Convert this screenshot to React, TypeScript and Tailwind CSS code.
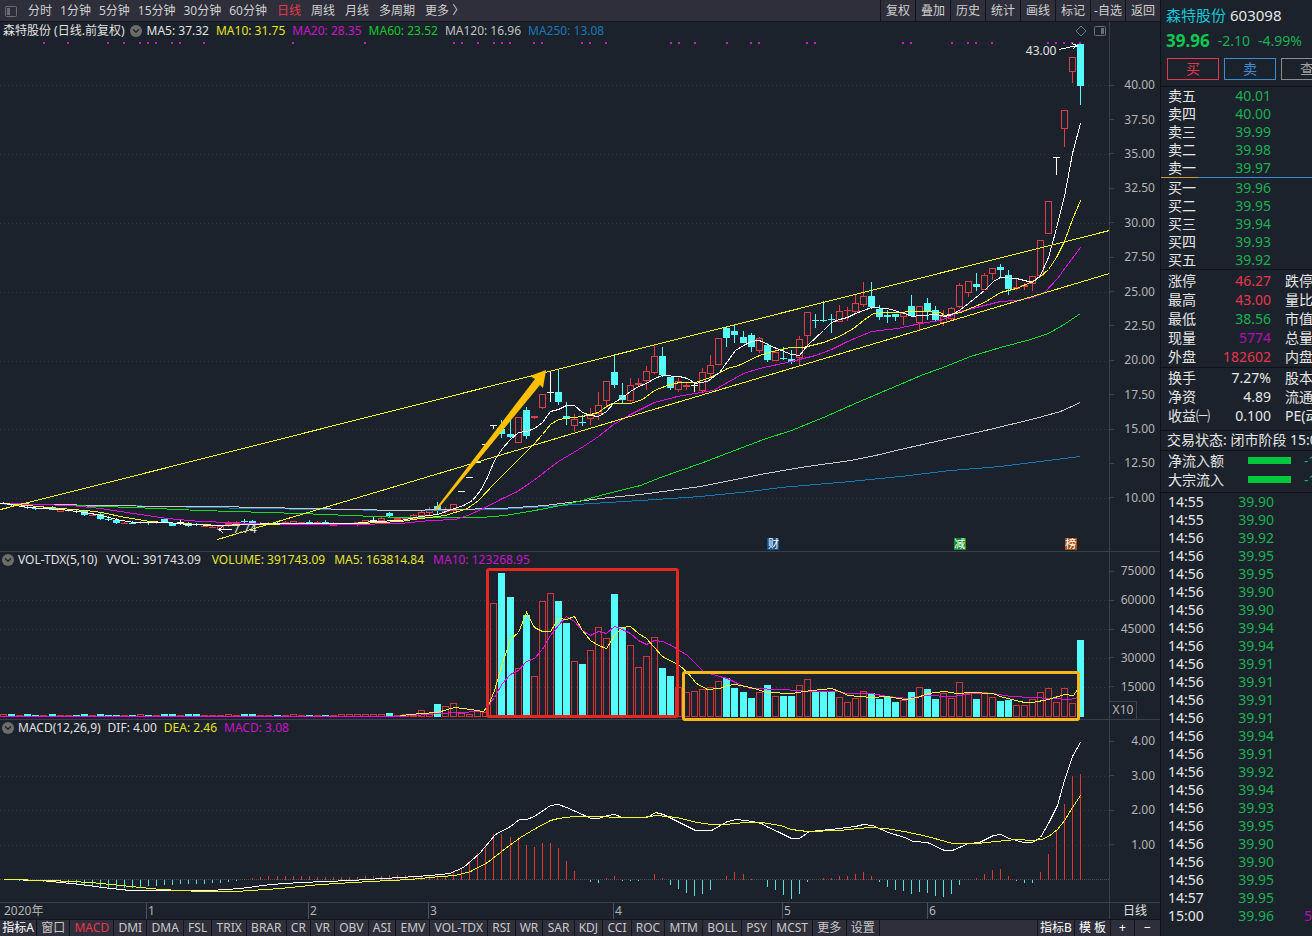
import { ChevronDown } from 'lucide-react';

type Candle = [string, number, number, number, number];

const STEP = 8.035;
const WIDTH = 1109;

// colour, high, body top, body bottom, low
const candles: Candle[] = [
  ['w', 502, 503, 503, 504], ['c', 503, 504, 505, 506], ['r', 504, 505, 506, 507], ['c', 506, 507, 508, 509], ['c', 506, 508, 509, 510], ['w', 506, 508, 508, 509],
  ['c', 506, 507, 510, 510], ['r', 508, 509, 512, 512], ['r', 509, 510, 511, 512], ['c', 510, 511, 512, 513], ['c', 510, 511, 515, 516], ['r', 514, 515, 516, 516],
  ['c', 512, 514, 519, 520], ['c', 516, 519, 520, 521], ['c', 518, 520, 523, 524], ['r', 522, 523, 524, 524], ['c', 521, 523, 524, 524], ['r', 521, 522, 523, 524],
  ['c', 521, 522, 523, 525], ['r', 521, 522, 523, 524], ['c', 518, 519, 522, 523], ['c', 522, 523, 526, 526], ['w', 520, 522, 522, 525], ['c', 522, 523, 526, 527],
  ['c', 523, 524, 525, 526], ['r', 525, 526, 527, 527], ['r', 525, 527, 528, 528], ['r', 525, 526, 530, 530], ['r', 521, 523, 525, 527], ['r', 521, 522, 524, 525],
  ['c', 519, 521, 522, 524], ['c', 520, 521, 523, 524], ['r', 522, 523, 524, 525], ['r', 522, 523, 524, 524], ['c', 522, 523, 524, 525], ['r', 521, 522, 523, 524],
  ['r', 521, 521, 524, 524], ['r', 522, 522, 523, 524], ['c', 520, 522, 523, 524], ['r', 521, 522, 523, 524], ['c', 520, 522, 523, 524], ['r', 522, 523, 526, 526],
  ['r', 523, 524, 525, 525], ['r', 523, 523, 524, 525], ['r', 522, 522, 525, 526], ['r', 520, 520, 523, 524], ['w', 517, 520, 520, 523], ['r', 517, 518, 521, 521],
  ['c', 512, 513, 516, 517], ['r', 517, 518, 520, 521], ['r', 517, 518, 519, 521], ['r', 514, 515, 519, 520], ['r', 510, 512, 516, 517], ['r', 507, 509, 513, 515],
  ['c', 502, 506, 511, 515], ['r', 507, 509, 512, 514], ['r', 504, 504, 511, 512], ['w', 491, 491, 491, 491], ['w', 477, 477, 477, 477], ['w', 462, 462, 462, 462],
  ['w', 444, 444, 444, 444], ['w', 425, 425, 425, 429], ['c', 420, 429, 434, 438], ['c', 420, 434, 437, 438], ['r', 417, 417, 443, 443], ['c', 407, 410, 436, 439],
  ['r', 416, 416, 418, 419], ['r', 394, 394, 408, 409], ['w', 372, 392, 392, 402], ['c', 369, 392, 402, 405], ['c', 402, 416, 419, 425], ['r', 414, 419, 426, 432],
  ['c', 415, 422, 423, 426], ['r', 408, 414, 419, 425], ['r', 392, 405, 414, 420], ['r', 381, 381, 401, 408], ['c', 355, 372, 385, 388], ['c', 383, 395, 400, 404],
  ['r', 378, 385, 401, 402], ['r', 378, 383, 385, 387], ['r', 366, 371, 381, 390], ['r', 345, 356, 373, 374], ['c', 347, 356, 375, 377], ['c', 377, 377, 388, 390],
  ['r', 378, 381, 390, 392], ['r', 382, 385, 387, 390], ['w', 382, 385, 385, 392], ['r', 368, 372, 391, 392], ['r', 355, 365, 374, 377], ['r', 338, 338, 365, 365],
  ['c', 326, 328, 338, 347], ['c', 325, 331, 335, 343], ['c', 331, 337, 343, 343], ['c', 333, 335, 347, 352], ['r', 337, 338, 351, 353], ['c', 343, 345, 360, 362],
  ['r', 350, 352, 361, 361], ['c', 347, 358, 359, 360], ['c', 350, 359, 362, 364], ['r', 336, 339, 358, 365], ['r', 312, 312, 336, 345], ['c', 314, 320, 321, 328],
  ['c', 301, 320, 321, 322], ['c', 314, 319, 320, 333], ['r', 305, 311, 322, 322], ['r', 307, 310, 311, 321], ['r', 295, 303, 312, 313], ['r', 282, 296, 305, 307],
  ['c', 282, 296, 307, 309], ['c', 305, 309, 317, 320], ['c', 310, 315, 317, 323], ['c', 314, 314, 317, 321], ['r', 313, 313, 317, 325], ['c', 295, 306, 316, 317],
  ['r', 306, 306, 323, 330], ['c', 298, 303, 311, 320], ['c', 306, 310, 320, 321], ['r', 310, 316, 323, 326], ['r', 307, 308, 319, 320], ['r', 283, 285, 307, 308],
  ['r', 281, 281, 293, 297], ['c', 273, 284, 287, 291], ['r', 273, 275, 290, 290], ['r', 268, 268, 274, 280], ['c', 264, 267, 270, 278], ['c', 270, 275, 289, 295],
  ['r', 278, 287, 289, 290], ['r', 283, 285, 287, 290], ['r', 276, 276, 284, 291], ['r', 240, 240, 276, 276], ['r', 201, 201, 234, 234], ['w', 157, 157, 157, 175],
  ['r', 110, 110, 129, 147], ['r', 57, 57, 72, 83], ['c', 44, 44, 86, 105],
];

// bar tops, oldest first
const volumeTops = [
  714, 714, 715, 714, 715, 715, 714, 715, 715, 715, 714, 715, 714, 715, 715, 715, 715, 714, 715, 715, 714, 714, 715, 714, 714, 715, 715,
  715, 714, 715, 714, 714, 715, 715, 715, 715, 714, 715, 715, 715, 715, 715, 714, 714, 714, 714, 714, 714, 713, 715, 714, 714,
  710, 713, 704, 706, 703, 713, 714, 711, 712, 603, 573, 597, 668, 615, 676, 601, 593, 601, 623, 661, 664, 650, 627, 638, 594, 627,
  645, 667, 656, 637, 668, 676, 687, 692, 691, 689, 687, 681, 678, 688, 692, 698, 692, 685, 696, 696, 696, 685, 679, 691, 691, 691,
  697, 702, 698, 691, 693, 699, 697, 702, 700, 692, 687, 689, 699, 693, 698, 682, 693, 699, 692, 697, 701, 700, 705, 705, 699, 692,
  688, 702, 688, 703, 640,
];

// ends of the MACD sticks, measured from the zero line at 880
const macdEnds = [
  880, 880, 881, 881, 881, 882, 882, 883, 884, 884, 885, 886, 887, 888, 889, 888, 888, 887, 886, 886, 885, 885, 884, 884, 884, 884, 883,
  883, 882, 881, 879, 878, 877, 876, 876, 876, 876, 876, 876, 877, 877, 877, 877, 877, 877, 876, 876, 876, 875, 875, 875, 876, 875, 875,
  875, 877, 872, 868, 861, 853, 845, 834, 834, 837, 837, 845, 847, 843, 843, 848, 861, 871, 880, 882, 883, 878, 876, 881, 881, 881,
  880, 874, 878, 885, 889, 893, 896, 894, 890, 880, 876, 872, 874, 879, 880, 887, 890, 895, 899, 894, 882, 880, 878, 878, 876, 876,
  874, 872, 876, 882, 887, 890, 891, 894, 892, 893, 896, 897, 894, 885, 879, 878, 874, 870, 869, 876, 881, 883, 883, 872, 854,
  830, 804, 776, 774,
];

const priceLines = [
  { color: '#1478b4', points: '4,504 120,505 250,508 400,510 500,509 560,505 640,500 700,496 750,491 780,487 850,481 900,476 950,470 1000,466 1040,461 1080,456' },
  { color: '#c8c8c8', points: '4,503 100,505 170,506 215,506 400,510 500,508 545,505 600,498 640,494 700,486 760,474 800,467 850,460 875,455 900,449 940,440 985,430 1035,418 1060,411 1080,402' },
  { color: '#14dc28', points: '4,503 70,505 133,507 200,510 300,513 350,515 400,517 480,517 505,515 540,509 570,503 600,495 640,485 660,477 700,463 763,439 791,430 823,417 857,402 890,388 923,374 940,368 970,356 1000,347 1030,339 1048,333 1062,325 1080,313' },
  { color: '#e010e0', points: '4,503 70,505 100,508 133,513 167,518 200,521 230,522 270,524 350,524 400,523 430,520 455,519 467,515 483,508 502,498 517,491 533,480 558,461 583,446 598,436 613,424 630,414 654,402 677,396 700,392 713,390 727,382 743,373 759,368 791,361 815,355 831,349 847,341 871,331 897,328 920,323 940,320 960,311 1000,301 1016,300 1032,297 1044,292 1057,278 1068,263 1080,247' },
  { color: '#f4f428', points: '4,503 60,508 85,510 101,512 125,517 150,521 180,523 220,525 300,523 360,523 400,521 420,518 445,515 467,508 478,500 494,483 510,467 526,451 534,443 542,434 550,424 558,419 582,416 598,412 606,406 612,403 630,403 642,399 654,390 667,385 679,382 695,382 710,377 727,368 738,365 759,355 776,350 790,347 803,347 823,342 839,336 853,328 863,320 873,313 887,312 923,311 940,312 944,315 960,312 984,302 1000,292 1016,288 1032,281 1040,276 1048,269 1056,257 1064,241 1072,219 1080,200' },
  { color: '#ffffff', points: '4,503 27,507 60,509 85,512 101,515 116,519 133,522 167,522 187,524 217,525 247,524 273,523 310,523 353,523 373,521 400,520 420,516 437,514 454,508 463,505 472,500 480,490 487,477 494,460 502,448 510,439 518,432 526,431 534,428 542,422 550,411 558,409 566,405 574,405 582,412 590,415 598,416 606,411 614,402 622,397 630,391 638,386 646,383 654,378 662,375 679,376 687,378 695,383 707,381 719,372 735,350 743,345 751,341 759,340 776,348 791,354 799,355 807,345 823,330 831,322 839,319 847,317 855,313 871,307 887,308 904,313 912,316 920,315 937,314 944,316 952,314 960,309 968,303 984,290 993,281 1000,277 1016,278 1032,282 1040,275 1048,257 1056,228 1064,196 1072,153 1080,123' },
  { color: '#f4f428', points: '0,509 1109,230' },
  { color: '#f4f428', points: '217,539 1109,273' },
];

const volumeLines = [
  { color: '#e010e0', points: '0,716 400,716 454,712 483,711 494,697 502,683 510,674 518,670 526,661 534,658 542,649 550,635 558,625 566,616 574,621 582,630 590,635 598,631 606,633 614,626 622,629 630,633 638,640 646,644 654,640 662,641 671,645 687,655 700,668 703,671 719,676 727,678 737,683 750,688 783,689 807,691 837,691 847,693 871,693 887,696 908,698 923,695 953,696 973,693 992,693 1010,696 1032,697 1070,699 1077,697' },
  { color: '#f4f428', points: '400,715 421,713 437,712 454,707 470,709 483,711 488,705 494,690 502,663 510,639 518,632 526,612 534,627 542,631 550,631 558,618 566,619 574,616 582,630 590,640 598,645 606,648 614,635 622,627 630,626 638,633 646,638 654,647 662,656 679,665 687,672 696,683 707,689 719,688 727,685 735,684 750,687 767,692 792,693 803,691 831,688 839,691 848,695 871,697 887,696 904,699 917,697 928,693 944,691 957,693 970,692 992,693 1003,697 1024,702 1032,702 1048,699 1064,694 1073,695 1077,689' },
];

const macdLines = [
  { color: '#ffffff', points: '4,879 40,880 80,884 110,888 130,890 170,890 210,890 240,888 270,884 300,882 350,880 400,877 430,875 449,873 463,867 479,853 495,834 510,826 519,819 526,819 534,816 550,805 558,804 566,807 591,818 598,818 607,815 614,814 622,817 647,817 655,812 663,814 679,822 695,830 711,830 727,821 736,819 752,821 761,823 768,827 777,831 791,838 799,838 809,831 830,829 855,826 863,824 872,825 888,832 904,837 913,841 927,842 944,850 952,850 968,843 979,842 993,835 1000,834 1009,838 1023,842 1032,842 1040,837 1048,823 1057,805 1064,780 1072,756 1080,742' },
  { color: '#f4f428', points: '4,879 50,880 90,882 130,886 160,889 200,891 235,891 280,888 320,884 370,881 410,879 440,876 455,875 470,871 487,862 505,848 520,837 535,828 550,820 558,818 573,816 642,817 656,815 676,817 697,822 711,824 725,824 745,822 761,822 780,825 791,829 807,831 839,830 869,827 885,828 904,831 927,836 952,843 977,843 1005,840 1016,839 1032,840 1041,839 1048,836 1057,829 1064,820 1072,807 1080,795' },
];

const eventDots = [
  44, 68, 108, 124, 140, 148, 156, 172, 180, 204, 293, 365, 454, 462, 478, 494, 502, 510, 534, 542, 582, 590, 606, 671, 679,
  695, 727, 751, 759, 807, 815, 903, 911, 952, 968, 976, 992, 1048, 1056, 1064, 1072, 1080,
];

const minutePeriods = ['分时', '1分钟', '5分钟', '15分钟', '30分钟', '60分钟'];
const longPeriods = ['日线', '周线', '月线', '多周期', '更多 〉'];
const tools = ['复权', '叠加', '历史', '统计', '画线', '标记', '-自选', '返回'];
const indicators = [
  '窗口', 'MACD', 'DMI', 'DMA', 'FSL', 'TRIX', 'BRAR', 'CR', 'VR', 'OBV', 'ASI', 'EMV', 'VOL-TDX', 'RSI', 'WR', 'SAR', 'KDJ',
  'CCI', 'ROC', 'MTM', 'BOLL', 'PSY', 'MCST', '更多', '设置',
];
const months = [
  { label: '2020年', width: 146 },
  { label: '1', width: 162 },
  { label: '2', width: 120 },
  { label: '3', width: 185 },
  { label: '4', width: 169 },
  { label: '5', width: 145 },
  { label: '6', width: 182 },
];

const priceAxis = ['40.00', '37.50', '35.00', '32.50', '30.00', '27.50', '25.00', '22.50', '20.00', '17.50', '15.00', '12.50', '10.00'];
const volumeAxis = ['75000', '60000', '45000', '30000', '15000'];
const macdAxis = ['4.00', '3.00', '2.00', '1.00'];

const asks = [['卖五', '40.01'], ['卖四', '40.00'], ['卖三', '39.99'], ['卖二', '39.98'], ['卖一', '39.97']];
const bids = [['买一', '39.96'], ['买二', '39.95'], ['买三', '39.94'], ['买四', '39.93'], ['买五', '39.92']];
const stats = [
  ['涨停', '46.27', 'text-[#e8364a]', '跌停'],
  ['最高', '43.00', 'text-[#e8364a]', '量比'],
  ['最低', '38.56', 'text-[#18b050]', '市值'],
  ['现量', '5774', 'text-[#b010b4]', '总量'],
  ['外盘', '182602', 'text-[#e8364a]', '内盘'],
];
const ratios = [
  ['换手', '7.27%', 'text-[#e6e6e6]', '股本'],
  ['净资', '4.89', 'text-[#e6e6e6]', '流通'],
  ['收益㈠', '0.100', 'text-[#e6e6e6]', 'PE(动)'],
];
const tape = [
  ['14:55', '39.90'], ['14:55', '39.90'], ['14:56', '39.92'], ['14:56', '39.95'], ['14:56', '39.95'], ['14:56', '39.90'],
  ['14:56', '39.90'], ['14:56', '39.94'], ['14:56', '39.94'], ['14:56', '39.91'], ['14:56', '39.91'], ['14:56', '39.91'],
  ['14:56', '39.91'], ['14:56', '39.94'], ['14:56', '39.91'], ['14:56', '39.92'], ['14:56', '39.94'], ['14:56', '39.93'],
  ['14:56', '39.95'], ['14:56', '39.90'], ['14:56', '39.90'], ['14:56', '39.95'], ['14:57', '39.95'], ['15:00', '39.96'],
];

const colors: Record<string, string> = { r: '#e63c46', c: '#54fcfc', w: '#ffffff' };

const barX = (index: number) => Math.round(1080 - (candles.length - 1 - index) * STEP);

const Lines = ({ lines }: { lines: { color: string; points: string }[] }) => (
  <>
    {lines.map((line, index) => (
      <polyline key={index} points={line.points} fill="none" stroke={line.color} transform="translate(0.5 0.5)" />
    ))}
  </>
);

const GridLines = ({ rows }: { rows: number[] }) => (
  <>
    {rows.map((y) => (
      <line key={y} x1="0" x2={WIDTH} y1={y + 0.5} y2={y + 0.5} stroke="#343a45" strokeDasharray="1 3" />
    ))}
  </>
);

const PriceChart = () => (
  <svg viewBox="0 40 1109 511" preserveAspectRatio="none" shapeRendering="crispEdges" className="block w-full h-full">
    <GridLines rows={[85, 154, 223, 292, 361, 429, 498]} />
    {eventDots.map((x) => (
      <rect key={x} x={x - 1} y="42" width="2" height="2" fill="#c41ec4" />
    ))}
    {candles.map(([kind, high, top, bottom, low], index) => {
      const x = barX(index);
      const color = colors[kind];
      return (
        <g key={index} stroke={color}>
          {high < top && <line x1={x + 0.5} x2={x + 0.5} y1={high} y2={top} />}
          {low > bottom && <line x1={x + 0.5} x2={x + 0.5} y1={bottom} y2={low} />}
          {kind === 'w' || bottom - top < 2 ? (
            <line x1={x - 3} x2={x + 4} y1={top + 0.5} y2={top + 0.5} />
          ) : (
            <rect x={x - 2.5} y={top + 0.5} width="6" height={bottom - top - 1} fill={kind === 'c' ? color : 'none'} />
          )}
        </g>
      );
    })}
    <Lines lines={priceLines} />
    <path d="M1059 49.5 1077 45.5M1072 43.5l5 2-4 3.500M219 529.500h13M223 526l-4 3.500 4 3.500" fill="none" stroke="#fff" />
    <path d="M434 511 535 379 530 376 546 370 543 388 540 385 437 510Z" fill="#ffc000" shapeRendering="auto" />
  </svg>
);

const VolumeChart = () => (
  <svg viewBox="0 568 1109 151" preserveAspectRatio="none" shapeRendering="crispEdges" className="block w-full h-full overflow-visible">
    <GridLines rows={[600, 629, 658, 687]} />
    {volumeTops.map((top, index) => {
      const x = barX(index);
      const down = candles[index][0] === 'c';
      return (
        <rect
          key={index}
          x={x - 2.5}
          y={top + 0.5}
          width="6"
          height={716 - top}
          stroke={down ? '#54fcfc' : '#d2343e'}
          fill={down ? '#54fcfc' : 'none'}
        />
      );
    })}
    <Lines lines={volumeLines} />
    <g fill="none" strokeWidth="3" shapeRendering="auto">
      <rect x="487.500" y="569.500" width="190" height="147" rx="1.500" stroke="#e8281e" />
      <rect x="683.500" y="672.500" width="395" height="47" rx="1.500" stroke="#f8b81c" />
    </g>
  </svg>
);

const MacdChart = () => (
  <svg viewBox="0 736 1109 166" preserveAspectRatio="none" shapeRendering="crispEdges" className="block w-full h-full">
    <GridLines rows={[776, 810, 845]} />
    <line x1="0" x2={WIDTH} y1="879.500" y2="879.500" stroke="#4c525c" strokeDasharray="1 1" />
    {macdEnds.map((end, index) => {
      const x = barX(index) + 0.5;
      return <line key={index} x1={x} x2={x} y1="880" y2={end} stroke={end > 880 ? '#54e0e0' : '#e0342e'} />;
    })}
    <Lines lines={macdLines} />
  </svg>
);

const AxisLabels = ({ labels }: { labels: string[] }) => (
  <>
    {labels.map((label) => (
      <div key={label} className="flex-1 flex items-center justify-between pr-[5px] leading-none">
        <span className="w-1 h-px bg-[#3a414c]"></span>
        {label}
      </div>
    ))}
  </>
);

const Toggle = ({ label }: { label: string }) => (
  <button aria-label={label} className="w-3 h-3 shrink-0 rounded-full bg-[#6c6c6c] text-[#1c222c] flex items-center justify-center">
    <ChevronDown size={10} strokeWidth={3} />
  </button>
);

const OrderRows = ({ rows }: { rows: string[][] }) => (
  <table className="w-[103px] ml-[7px]">
    <tbody>
      {rows.map(([label, price]) => (
        <tr key={label} className="h-[18px]">
          <th scope="row" className="p-0 font-normal text-left">{label}</th>
          <td className="p-0 text-right text-[#18b050]">{price}</td>
        </tr>
      ))}
    </tbody>
  </table>
);

const StatRows = ({ rows }: { rows: string[][] }) => (
  <table className="table-fixed w-[164px] ml-[7px]">
    <tbody>
      {rows.map(([label, value, tone, next]) => (
        <tr key={label} className="h-[19px]">
          <th scope="row" className="w-[46px] p-0 font-normal text-left">{label}</th>
          <td className={`w-[57px] p-0 text-right ${tone}`}>{value}</td>
          <td className="p-0 pl-[14px]">{next}</td>
        </tr>
      ))}
    </tbody>
  </table>
);

const QuotePanel = () => (
  <aside className="w-[152px] shrink-0 overflow-hidden whitespace-nowrap border-l border-[#0e1218] text-sm leading-[18px] text-[#e6e6e6]">
    <div className="h-[29px] pt-[1px] pl-[5px] flex items-center gap-1 text-[15px]">
      <span className="text-[#10c8d8]">森特股份</span>
      <span>603098</span>
    </div>
    <div className="h-[23px] pl-[5px] flex items-center gap-2 text-[#18b050]">
      <span className="text-[17px] font-bold text-[#10c850]">39.96</span>
      <span>-2.10</span>
      <span>-4.99%</span>
    </div>
    <div className="h-[35px] pl-[6px] flex items-center gap-[5px] border-b border-[#0e1218]">
      <button className="w-[52px] h-[22px] shrink-0 border border-[#e8364a] text-[#e8364a] leading-none">买</button>
      <button className="w-[52px] h-[22px] shrink-0 border border-[#3c8cd2] text-[#3c8cd2] leading-none">卖</button>
      <button className="w-[52px] h-[22px] shrink-0 border border-[#8c8c8c] text-[#a0a0a0] leading-none">查</button>
    </div>
    <OrderRows rows={asks} />
    <div className="flex h-px mb-[1px]">
      <div className="w-[37px] bg-[#c89632]"></div>
      <div className="flex-1 bg-[#3c8cd2]"></div>
    </div>
    <OrderRows rows={bids} />
    <div className="py-[1px] border-y border-[#0e1218]">
      <StatRows rows={stats} />
    </div>
    <div className="pb-[5px] border-b border-[#0e1218]">
      <StatRows rows={ratios} />
    </div>
    <div className="h-5 pl-[6px] border-b border-[#0e1218]">交易状态: 闭市阶段 15:00</div>
    <div className="h-[42px] pl-[7px] border-b border-[#0e1218]">
      {['净流入额', '大宗流入'].map((label) => (
        <div key={label} className="h-[19px] flex items-center">
          <span className="w-20 shrink-0">{label}</span>
          <span className="w-[43px] h-[7px] shrink-0 bg-[#00c83c]"></span>
          <span className="pl-[13px] text-[#18b050]">-1</span>
        </div>
      ))}
    </div>
    <table className="table-fixed w-[180px] ml-[7px]">
      <tbody>
        {tape.map(([time, price], index) => (
          <tr key={index} className="h-[18px]">
            <td className="w-[46px] p-0">{time}</td>
            <td className="w-[60px] p-0 text-right text-[#18b050]">{price}</td>
            <td className="p-0 pl-[30px] text-[#b010b4]">{time === '15:00' ? '5774' : ''}</td>
          </tr>
        ))}
      </tbody>
    </table>
  </aside>
);

const App = () => {
  return (
    <div className="h-screen min-h-[640px] flex overflow-hidden bg-[#1c222c] font-['Noto_Sans','Noto_Sans_CJK_SC',sans-serif] text-xs text-[#e0e0e0]">
      <main className="flex-1 min-w-0 flex flex-col">
        <nav className="h-[22px] shrink-0 flex justify-between whitespace-nowrap bg-[#2e2f3b] border-b border-[#12161c] text-[#d0d0d0]">
          <div className="flex items-center gap-2 pt-[1px] pl-[5px]">
            <svg width="12" height="11" viewBox="0 0 12 11" className="mr-[3px]">
              <rect x=".5" y=".5" width="11" height="10" rx="1" fill="none" stroke="#6c6c74" />
              <rect x="2" y="2" width="3" height="7" fill="#6c6c74" />
            </svg>
            {minutePeriods.map((period) => (
              <button key={period}>{period}</button>
            ))}
            <div className="flex gap-[10px] pl-[2px]">
              {longPeriods.map((period) => (
                <button key={period} className={period === '日线' ? 'text-[#e8364a]' : ''}>{period}</button>
              ))}
            </div>
          </div>
          <div className="flex">
            {tools.map((tool) => (
              <button key={tool} className="w-[35px] pt-[1px] border-l border-[#12161c]">{tool}</button>
            ))}
          </div>
        </nav>

        <section className="flex-[529] min-h-0 flex border-b border-[#3a414c]">
          <div className="flex-1 min-w-0 flex flex-col">
            <header className="h-[18px] shrink-0 flex items-center gap-[5px] pl-[3px] whitespace-nowrap">
              <span>森特股份 (日线.前复权)</span>
              <Toggle label="主图设置" />
              <div className="flex gap-[7px]">
                <span>MA5: 37.32</span>
                <span className="text-[#e4e428]">MA10: 31.75</span>
                <span className="text-[#c814c8]">MA20: 28.35</span>
                <span className="text-[#14c828]">MA60: 23.52</span>
                <span className="text-[#c0c0c0]">MA120: 16.96</span>
                <span className="text-[#1478b4]">MA250: 13.08</span>
              </div>
              <svg width="34" height="12" viewBox="0 0 34 12" className="ml-auto">
                <path d="M6 1l5 5-5 5-5-5Z" fill="none" stroke="#5c7880" />
                <rect x="19.500" y="1.500" width="11" height="9" rx="1" fill="none" stroke="#6c6c74" />
                <rect x="26" y="3" width="3" height="6" fill="#6c6c74" />
              </svg>
            </header>
            <div className="flex-1 min-h-0 relative">
              <PriceChart />
              <span className="absolute left-[92.5%] top-[0.5%] leading-4">43.00</span>
              <span className="absolute left-[21%] top-[94.2%] leading-4">7.74</span>
              <span className="absolute left-[69.2%] bottom-[1px] w-3 h-3 leading-3 text-[11px] text-center text-white bg-[#14508c]">财</span>
              <span className="absolute left-[86%] bottom-[1px] w-3 h-3 leading-3 text-[11px] text-center text-white bg-[#148c28]">减</span>
              <span className="absolute left-[96%] bottom-[1px] w-3 h-3 leading-3 text-[11px] text-center text-white bg-[#a05014]">榜</span>
            </div>
          </div>
          <div className="w-[51px] shrink-0 flex flex-col border-l border-[#3a414c] text-[#b4b4b4]">
            <div className="flex-[46]"></div>
            <div className="flex-[447] flex flex-col">
              <AxisLabels labels={priceAxis} />
            </div>
            <div className="flex-[36]"></div>
          </div>
        </section>

        <section className="flex-[167] min-h-0 flex border-b border-[#3a414c]">
          <div className="flex-1 min-w-0 flex flex-col">
            <header className="h-4 shrink-0 flex items-center gap-1 pl-[2px] whitespace-nowrap">
              <Toggle label="成交量设置" />
              <div className="flex gap-[9px]">
                <span>VOL-TDX(5,10)</span>
                <span className="mr-[2px]">VVOL: 391743.09</span>
                <span className="text-[#e4e428]">VOLUME: 391743.09</span>
                <span className="text-[#e4e428]">MA5: 163814.84</span>
                <span className="text-[#c814c8]">MA10: 123268.95</span>
              </div>
            </header>
            <div className="flex-1 min-h-0">
              <VolumeChart />
            </div>
          </div>
          <div className="w-[51px] shrink-0 flex flex-col border-l border-[#3a414c] text-[#b4b4b4]">
            <div className="flex-[5]"></div>
            <div className="flex-[145] flex flex-col">
              <AxisLabels labels={volumeAxis} />
            </div>
            <div className="flex-[17] w-[27px] text-center leading-4 border-t border-r border-[#3a414c]">X10</div>
          </div>
        </section>

        <section className="flex-[182] min-h-0 flex border-b border-[#3a414c]">
          <div className="flex-1 min-w-0 flex flex-col">
            <header className="h-4 shrink-0 flex items-center gap-1 pl-[2px] whitespace-nowrap">
              <Toggle label="MACD设置" />
              <div className="flex gap-[7px]">
                <span>MACD(12,26,9)</span>
                <span>DIF: 4.00</span>
                <span className="text-[#e4e428]">DEA: 2.46</span>
                <span className="text-[#c814c8]">MACD: 3.08</span>
              </div>
            </header>
            <div className="flex-1 min-h-0">
              <MacdChart />
            </div>
          </div>
          <div className="w-[51px] shrink-0 flex flex-col border-l border-[#3a414c] text-[#b4b4b4]">
            <div className="flex-[4]"></div>
            <div className="flex-[138] flex flex-col">
              <AxisLabels labels={macdAxis} />
            </div>
            <div className="flex-[40]"></div>
          </div>
        </section>

        <div className="h-4 shrink-0 flex leading-4 text-[#b4b4b4]">
          <div className="flex-1 min-w-0 flex">
            {months.map((month, index) => (
              <div
                key={month.label}
                className={index === 0 ? 'pl-1' : 'pl-[1px] border-l border-[#4c525c]'}
                style={{ width: `${(month.width / WIDTH) * 100}%` }}
              >
                {month.label}
              </div>
            ))}
          </div>
          <div className="w-[51px] shrink-0 text-center border-l border-[#3a414c] text-[#e0e0e0]">日线</div>
        </div>

        <nav className="h-[17px] shrink-0 flex justify-between leading-4 whitespace-nowrap bg-[#2e2f3b] border-t border-[#12161c] text-[#c8c8c8]">
          <div className="flex-1 max-w-[880px] flex min-w-0 overflow-hidden">
            <button className="w-[37px] shrink-0 text-white border-r border-[#12161c]">指标A</button>
            {indicators.map((name) => (
              <button key={name} className={`flex-auto px-[3px] border-r border-[#12161c] ${name === 'MACD' ? 'text-[#e8364a]' : ''}`}>{name}</button>
            ))}
          </div>
          <div className="flex shrink-0 text-white">
            <button className="w-[37px] border-l border-[#12161c]">指标B</button>
            <button className="w-9 border-l border-[#12161c]">模 板</button>
            <button className="w-6 border-l border-[#12161c]">+</button>
            <button className="w-[26px] border-l border-[#12161c]">−</button>
          </div>
        </nav>
      </main>
      <QuotePanel />
    </div>
  );
};

export default App;
